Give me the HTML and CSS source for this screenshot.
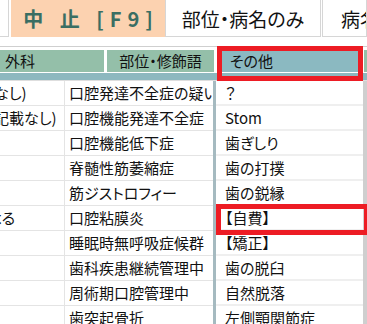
FILE: index.html
```html
<!DOCTYPE html>
<html lang="ja">
<head>
<meta charset="utf-8">
<link rel="stylesheet" href="styles.css">
</head>
<body>
<div class="toolbar">
  <div class="tb-stub"></div>
  <div class="tb-btn tb-stop">中 止 [F9]</div>
  <div class="tb-btn tb-part">部位・病名のみ</div>
  <div class="tb-btn tb-name">病名</div>
</div>
<div class="grid">
  <div class="head">
    <div class="hcell h1">外科</div>
    <div class="hcell h2">部位・修飾語</div>
    <div class="hcell h3">その他</div>
    <div class="hcell h4"></div>
  </div>
  <div class="strip"></div>
  <div class="body">
    <div class="row"><div class="c1"><span>(なし)</span></div><div class="c2">口腔発達不全症の疑い</div><div class="c3">？</div></div>
    <div class="row"><div class="c1"><span>(記載なし)</span></div><div class="c2">口腔機能発達不全症</div><div class="c3">Stom</div></div>
    <div class="row"><div class="c1"></div><div class="c2">口腔機能低下症</div><div class="c3">歯ぎしり</div></div>
    <div class="row"><div class="c1"></div><div class="c2">脊髄性筋萎縮症</div><div class="c3">歯の打撲</div></div>
    <div class="row"><div class="c1"></div><div class="c2">筋ジストロフィー</div><div class="c3">歯の鋭縁</div></div>
    <div class="row"><div class="c1"><span>よる</span></div><div class="c2">口腔粘膜炎</div><div class="c3">【自費】</div></div>
    <div class="row"><div class="c1"></div><div class="c2">睡眠時無呼吸症候群</div><div class="c3">【矯正】</div></div>
    <div class="row"><div class="c1"></div><div class="c2">歯科疾患継続管理中</div><div class="c3">歯の脱臼</div></div>
    <div class="row"><div class="c1"></div><div class="c2">周術期口腔管理中</div><div class="c3">自然脱落</div></div>
    <div class="row"><div class="c1"></div><div class="c2">歯突起骨折</div><div class="c3">左側顎関節症</div></div>
  </div>
  <div class="mark mark-head"></div>
  <div class="mark mark-row"></div>
</div>
</body>
</html>
```
FILE: styles.css
```css
* { box-sizing: border-box; }
html, body { margin: 0; padding: 0; }
body {
  width: 367px;
  height: 324px;
  overflow: hidden;
  background: #fff;
  color: #111;
  font-family: "Noto Sans CJK JP", "Noto Sans", sans-serif;
  font-feature-settings: "palt";
}
.toolbar {
  display: flex;
  height: 37px;
}
.tb-stub {
  width: 9px;
  border-right: 1px solid #d6d6d6;
  border-bottom: 1px solid #d6d6d6;
}
.tb-btn {
  display: flex;
  align-items: center;
  justify-content: center;
  border: 1px solid #d6d6d6;
  border-top: none;
  font-size: 19px;
  white-space: nowrap;
  overflow: hidden;
}
.tb-stop {
  width: 154px;
  margin-left: 2px;
  background: #fcd2b0;
  border-color: #fcd2b0;
  color: #3a6e63;
  font-weight: 700;
  font-size: 20px;
  letter-spacing: 6px;
  padding-left: 6px;
}
.tb-part { width: 156px; }
.tb-name {
  flex: 1;
  margin-left: 1px;
  justify-content: flex-start;
  padding-left: 18px;
}
.grid {
  position: relative;
  margin-top: 9px;
  border-top: 1px solid #cfcfcf;
}
.head {
  display: flex;
  padding-top: 3px;
  height: 26px;
  font-size: 15px;
}
.hcell {
  height: 22px;
  line-height: 22px;
  white-space: nowrap;
  overflow: hidden;
}
.h1 { width: 104px; background: #94bfa9; padding-left: 5px; }
.h2 { width: 107px; margin-left: 3px; background: #94bfa9; text-align: center; }
.h3 { width: 146px; margin-left: 3px; background: #8bb9c1; padding-left: 13px; }
.h4 { flex: 1; margin-left: 1px; background: #94bfa9; }
.strip {
  height: 7px;
  background: #8db8bf;
  border-bottom: 1px solid #dedede;
  height: 8px;
}
.body {
  font-size: 15px;
  background: linear-gradient(to right, #fff 213px, #a5bac0 213px 216px, #fff 216px 363px, #cfcfcf 363px);
}
.row {
  display: flex;
  height: 25px;
}
.c1, .c2, .c3 {
  white-space: nowrap;
  overflow: hidden;
}
.c1 {
  width: 65px;
  border-right: 1px solid #e4e4e4;
  border-bottom: 1px solid #e4e4e4;
  line-height: 24px;
}
.c1 span { margin-left: -11px; }
.c2 {
  width: 148px;
  border-bottom: 1px solid #e4e4e4;
  padding-left: 4px;
  line-height: 24px;
}
.c3 {
  width: 147px;
  margin-left: 3px;
  background: #fff;
  border-bottom: 2px solid #efefef;
  padding-left: 9px;
  line-height: 24px;
}
.mark {
  position: absolute;
  border: 5px solid #ed1c24;
}
.mark-head {
  left: 217px;
  top: -1px;
  width: 146px;
  height: 35px;
}
.mark-row {
  left: 216px;
  top: 157px;
  width: 153px;
  height: 31px;
}
```
